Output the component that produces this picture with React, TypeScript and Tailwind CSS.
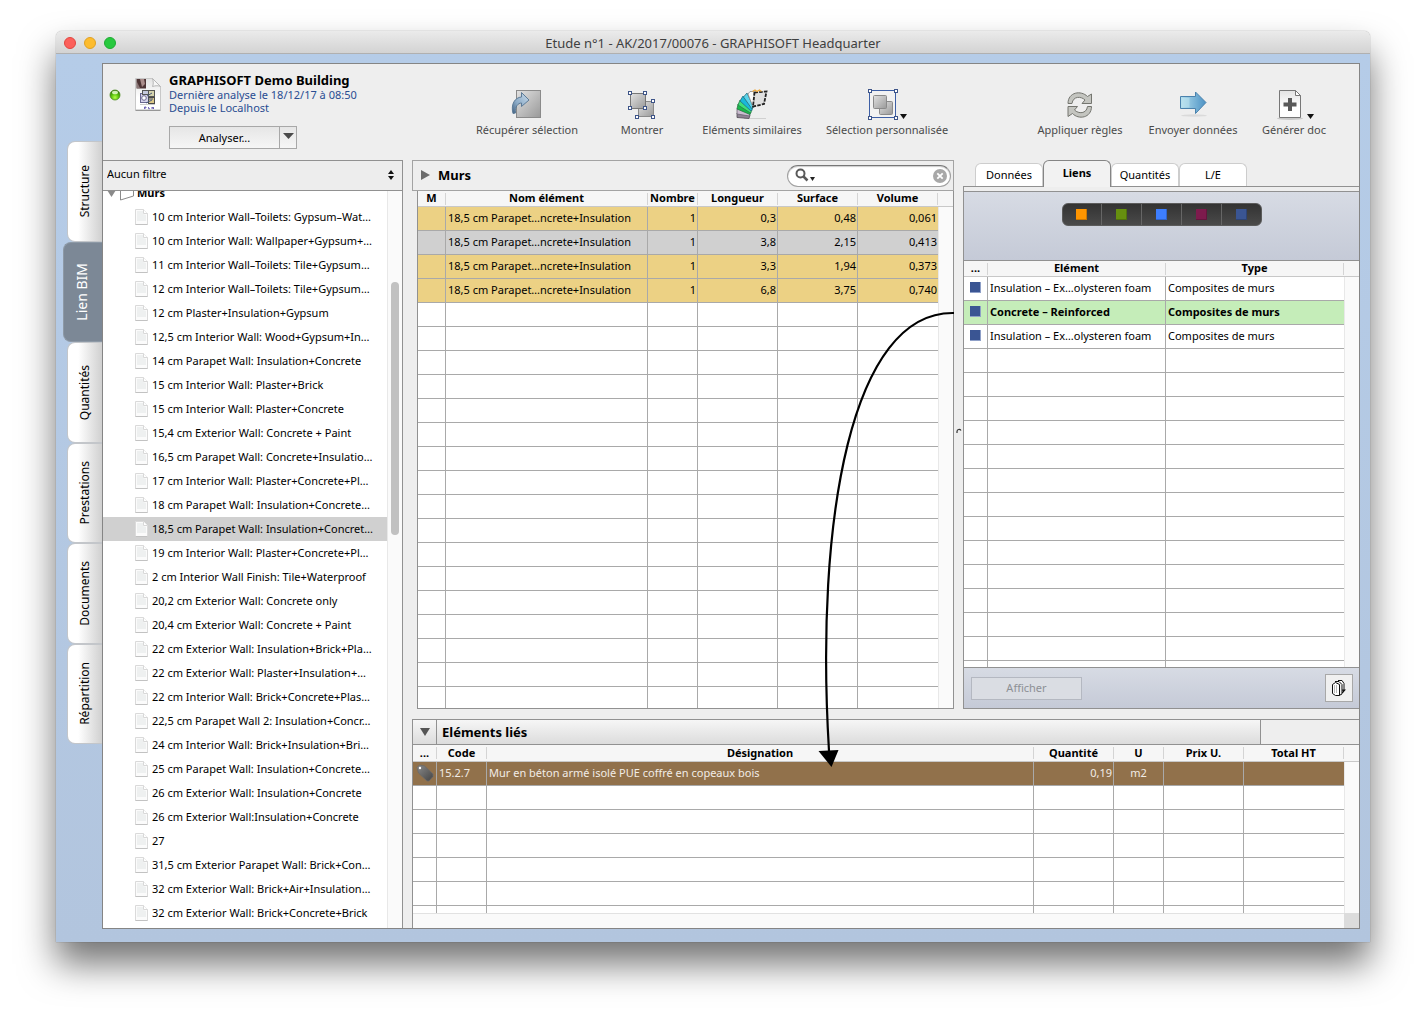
import React from "react";

const walls = [
  "10 cm Interior Wall–Toilets: Gypsum–Wat…",
  "10 cm Interior Wall: Wallpaper+Gypsum+…",
  "11 cm Interior Wall–Toilets: Tile+Gypsum…",
  "12 cm Interior Wall–Toilets: Tile+Gypsum…",
  "12 cm Plaster+Insulation+Gypsum",
  "12,5 cm Interior Wall: Wood+Gypsum+In…",
  "14 cm Parapet Wall: Insulation+Concrete",
  "15 cm Interior Wall: Plaster+Brick",
  "15 cm Interior Wall: Plaster+Concrete",
  "15,4 cm Exterior Wall: Concrete + Paint",
  "16,5 cm Parapet Wall: Concrete+Insulatio…",
  "17 cm Interior Wall: Plaster+Concrete+Pl…",
  "18 cm Parapet Wall: Insulation+Concrete…",
  "18,5 cm Parapet Wall: Insulation+Concret…",
  "19 cm Interior Wall: Plaster+Concrete+Pl…",
  "2 cm Interior Wall Finish: Tile+Waterproof",
  "20,2 cm Exterior Wall: Concrete only",
  "20,4 cm Exterior Wall: Concrete + Paint",
  "22 cm Exterior Wall: Insulation+Brick+Pla…",
  "22 cm Exterior Wall: Plaster+Insulation+…",
  "22 cm Interior Wall: Brick+Concrete+Plas…",
  "22,5 cm Parapet Wall 2: Insulation+Concr…",
  "24 cm Interior Wall: Brick+Insulation+Bri…",
  "25 cm Parapet Wall: Insulation+Concrete…",
  "26 cm Exterior Wall: Insulation+Concrete",
  "26 cm Exterior Wall:Insulation+Concrete",
  "27",
  "31,5 cm Exterior Parapet Wall: Brick+Con…",
  "32 cm Exterior Wall: Brick+Air+Insulation…",
  "32 cm Exterior Wall: Brick+Concrete+Brick",
];

const elements = [
  { values: ["", "18,5 cm Parapet…ncrete+Insulation", "1", "0,3", "0,48", "0,061"], selected: false },
  { values: ["", "18,5 cm Parapet…ncrete+Insulation", "1", "3,8", "2,15", "0,413"], selected: true },
  { values: ["", "18,5 cm Parapet…ncrete+Insulation", "1", "3,3", "1,94", "0,373"], selected: false },
  { values: ["", "18,5 cm Parapet…ncrete+Insulation", "1", "6,8", "3,75", "0,740"], selected: false },
];

const links = [
  { name: "Insulation – Ex…olysteren foam", type: "Composites de murs", active: false },
  { name: "Concrete – Reinforced", type: "Composites de murs", active: true },
  { name: "Insulation – Ex…olysteren foam", type: "Composites de murs", active: false },
];

const sideTabs = ["Structure", "Lien BIM", "Quantités", "Prestations", "Documents", "Répartition"];

const swatches = [
  { label: "Orange", color: "bg-[#ff9500]" },
  { label: "Vert", color: "bg-[#66900f]" },
  { label: "Bleu", color: "bg-[#3d7eff]" },
  { label: "Pourpre", color: "bg-[#7d1b4d]" },
  { label: "Marine", color: "bg-[#3a5593]" },
];

const range = (n: number) => Array.from({ length: n }, (_, i) => i);

function Gradients() {
  return (
    <svg width="0" height="0" className="absolute" aria-hidden="true">
      <defs>
        <linearGradient id="steel" x1="0" y1="0" x2="1" y2="1">
          <stop offset="0" stopColor="#e2e2e2" />
          <stop offset="1" stopColor="#999" />
        </linearGradient>
        <linearGradient id="sky" x1="0" y1="0" x2="1" y2="0">
          <stop offset="0" stopColor="#b4dfee" />
          <stop offset="1" stopColor="#4b91c4" />
        </linearGradient>
        <linearGradient id="bend" x1="1" y1="0" x2="0" y2="1">
          <stop offset="0" stopColor="#c9dbea" />
          <stop offset="0.6" stopColor="#8dacc8" />
          <stop offset="1" stopColor="#3f5f80" />
        </linearGradient>
        <linearGradient id="paper" x1="0" y1="0" x2="0" y2="1">
          <stop offset="0" stopColor="#e3e3e3" />
          <stop offset="0.6" stopColor="#fff" />
        </linearGradient>
        <linearGradient id="tag" x1="0" y1="0" x2="1" y2="1">
          <stop offset="0" stopColor="#8b8b8b" />
          <stop offset="1" stopColor="#444" />
        </linearGradient>
        <radialGradient id="led" cx="0.5" cy="0.75" r="0.7">
          <stop offset="0" stopColor="#b6ff4a" />
          <stop offset="0.5" stopColor="#5cc60c" />
          <stop offset="1" stopColor="#2c6d05" />
        </radialGradient>
      </defs>
    </svg>
  );
}

function DocIcon() {
  return (
    <svg width="13" height="16" viewBox="0 0 13 16" className="shrink-0" aria-hidden="true">
      <path d="M.5.5h8l4 4v11h-12z" fill="#fbfbfb" stroke="#dadada" />
      <path d="M2 2h6v3l3 1v6H2z" fill="#eef0f0" />
      <path d="M8.500.5v4h4" fill="#fff" stroke="#d8d8d8" />
      <path d="M.5 15.500h12" stroke="#c2c2c2" />
    </svg>
  );
}

function PlanFileIcon() {
  return (
    <svg width="26" height="33" viewBox="0 0 26 33" className="shrink-0" aria-hidden="true">
      <path d="M.5.5h17l8 8v23.500H.5z" fill="url(#paper)" stroke="#c8c8c8" />
      <path d="M17.500.5c1 3 1 6 0 8 3-1 6-1 8 0z" fill="#f7f7f7" stroke="#b5b5b5" />
      <path d="M1.500 1H11v9.500H1.500z" fill="#4d3435" />
      <path d="M5 1h4l1 5-3 3z" fill="#a98c8a" />
      <path d="M2 4l3 6H2z" fill="#8c7778" />
      <path d="M.5 32.400h25" stroke="#909090" />
      <rect x="5.500" y="15.500" width="8" height="9" fill="#d4d1ea" stroke="#6a678f" />
      <circle cx="9" cy="20" r="2.300" fill="#fff" stroke="#6a678f" />
      <rect x="13.500" y="12.500" width="6" height="6" fill="#d6d4ae" stroke="#555" />
      <rect x="7.500" y="12.500" width="6" height="4" fill="#c5c9dd" stroke="#555" />
      <rect x="13.500" y="19.500" width="6" height="6" fill="#dcc889" stroke="#4a4a4a" />
      <path d="M12 18l5-3M13 21h5M11 25l6-3" stroke="#4a5a7d" />
      <path d="M5 26.500h15" stroke="#aaa" strokeWidth="0.600" />
      <path d="M9.500 31v-2h1.500v1h-1.500M13.500 29v1.700h1.500M17 31v-2l1.500 2v-2" stroke="#5649a8" strokeWidth="0.800" fill="none" />
    </svg>
  );
}

function FetchIcon() {
  return (
    <svg width="32" height="32" viewBox="0 0 32 32" aria-hidden="true">
      <rect x="5.500" y="1.500" width="24" height="27" fill="url(#steel)" stroke="#8a8a8a" />
      <path d="M2 24.500C-.5 15 4 8.500 10.500 8V3.500L18 11l-7.500 6.500V14C7 14 4 17.500 4.500 24z" fill="url(#bend)" stroke="#5d7b97" />
    </svg>
  );
}

function Handle({ x, y }: { x: number; y: number }) {
  return <rect x={x} y={y} width="3" height="3" fill="#fff" stroke="#3d5488" />;
}

function ShowIcon() {
  return (
    <svg width="28" height="32" viewBox="0 0 28 32" aria-hidden="true">
      <rect x="10.500" y="12.500" width="15" height="15" fill="url(#steel)" stroke="#8a8a8a" />
      <rect x="2.500" y="4.500" width="15" height="15" fill="url(#steel)" stroke="#777" />
      <Handle x={0.5} y={2.5} />
      <Handle x={15.5} y={2.5} />
      <Handle x={0.5} y={17.5} />
      <Handle x={15.5} y={17.5} />
      <Handle x={23.5} y={10.5} />
      <Handle x={7.5} y={26.5} />
      <Handle x={23.5} y={26.5} />
    </svg>
  );
}

function FanIcon() {
  return (
    <svg width="32" height="32" viewBox="0 0 32 32" aria-hidden="true">
      <path d="M8 29.500h22" stroke="#d0d0d0" />
      <path d="M1 24l13 2-1 3.500-12-1z" fill="#8f8394" stroke="#4e4a52" strokeWidth="0.800" />
      <path d="M1 19.500l13 5-.5 2.500L1 25z" fill="#cbbcd0" stroke="#6a6270" strokeWidth="0.800" />
      <path d="M2 15l13 8-1 2.500L1 20z" fill="#18b84b" stroke="#2a7a44" strokeWidth="0.800" />
      <path d="M4 11l12 10-1.500 3L2 16z" fill="#3ee07a" stroke="#2a7a44" strokeWidth="0.800" />
      <path d="M7 7l9.500 13-1.500 2L4 12z" fill="#19b9da" stroke="#24707f" strokeWidth="0.800" />
      <path d="M11 4l6.500 14-1.500 2L7.500 8z" fill="#5ad3ea" stroke="#24707f" strokeWidth="0.800" />
      <path d="M14 2.500h4L19 17l-2 1-5-13z" fill="#fafafa" stroke="#888" strokeWidth="0.800" />
      <path d="M18.500 3.500l12-1L28 15l-11 2.500z" fill="#e0e0e0" />
      <path d="M18.500 3.500l12-1L28 15l-11 2.500z" fill="none" stroke="#222" strokeWidth="1.800" strokeDasharray="3.500 1.200" />
      <path d="M16.500 2.500l2.500-1.500 2 1.500L23.500 1l2 1.500" fill="none" stroke="#efa83a" strokeWidth="1.200" />
    </svg>
  );
}

function CustomIcon() {
  return (
    <svg width="40" height="32" viewBox="0 0 40 32" aria-hidden="true">
      <rect x="2.500" y="1.500" width="26" height="27" fill="#f2f2f2" stroke="#3d5fa5" />
      <rect x="12.500" y="12.500" width="13" height="13" rx="1" fill="url(#steel)" stroke="#8a8a8a" />
      <rect x="6.500" y="6.500" width="13" height="13" rx="1" fill="url(#steel)" stroke="#8a8a8a" />
      <Handle x={1.5} y={0.5} />
      <Handle x={27.5} y={0.5} />
      <Handle x={1.5} y={27.5} />
      <Handle x={27.5} y={27.5} />
      <path d="M33 25h7l-3.500 5z" fill="#111" />
    </svg>
  );
}

function RulesIcon() {
  return (
    <svg width="28" height="32" viewBox="0 0 28 32" aria-hidden="true">
      <g fill="#c4c5c0" stroke="#74756f" strokeLinejoin="round">
        <path d="M2 14.500C2 3 15 1 21.500 7.500L25.500 5v9.500H16L19 11C15 7 7 7 6 14.500z" />
        <path d="M25.500 17.500C25.500 29 12.500 31 6.500 24.500L2 27.500v-10h9.500L8.500 21C12.500 25 20.500 25 21.500 17.500z" />
      </g>
    </svg>
  );
}

function SendIcon() {
  return (
    <svg width="28" height="32" viewBox="0 0 28 32" aria-hidden="true">
      <ellipse cx="15" cy="26.500" rx="13" ry="1.200" fill="#dadada" />
      <path d="M1.500 7.500h15V3L27 13.500 16.500 24.500v-5h-15z" fill="url(#sky)" stroke="#4a82ad" />
      <path d="M2.500 9h8v9.500h-8z" fill="#c4e8f2" opacity="0.500" />
    </svg>
  );
}

function NewDocIcon() {
  return (
    <svg width="42" height="32" viewBox="0 0 42 32" aria-hidden="true">
      <ellipse cx="17" cy="29.500" rx="13" ry="1.500" fill="#c9c9c9" />
      <path d="M6.500 1.500h16l5 5v22h-21z" fill="url(#paper)" stroke="#777" />
      <path d="M22.500 1.500v5h5z" fill="#fff" stroke="#777" />
      <path d="M15 9h4v4.500h4.500v4H19V22h-4v-4.500h-4.500v-4H15z" fill="#595959" />
      <path d="M34 25h7l-3.500 5z" fill="#111" />
    </svg>
  );
}

function StackIcon() {
  return (
    <svg width="16" height="18" viewBox="0 0 16 18" aria-hidden="true">
      <path d="M7 1.500h4l2 3V12l-3 3" fill="#fff" stroke="#111" />
      <path d="M4 2.500h4l3 3V15l-3 1.500" fill="#eee" stroke="#111" />
      <path d="M1.500 5.500l3-2 4 2v11h-4l-3-2z" fill="#fff" stroke="#111" />
      <path d="M3 7h4M3 9h4M3 11h4M3 13h4" stroke="#777" strokeDasharray="1 1" />
      <path d="M11 10.500h4L12 14z" fill="#111" />
    </svg>
  );
}

function TagIcon() {
  return (
    <svg width="18" height="18" viewBox="0 0 18 18" className="mx-auto" aria-hidden="true">
      <path d="M1 3.500L3.500 1l5 1 8.500 8v2.500L13 17h-2L2.500 9z" fill="url(#tag)" stroke="#6a6a6a" strokeWidth="0.800" />
      <circle cx="4" cy="4" r="1.200" fill="#fff" />
    </svg>
  );
}

function ToolButton({ label, width, children }: { label: string; width: string; children: React.ReactNode }) {
  return (
    <button type="button" className={`flex shrink-0 flex-col items-center ${width}`}>
      {children}
      <span className="mt-px leading-4 whitespace-nowrap text-[#4a4a4a]">{label}</span>
    </button>
  );
}

function Th({ children, last, height = "h-4" }: { children?: React.ReactNode; last?: boolean; height?: string }) {
  return (
    <th scope="col" className={`border-b border-[#c8c8c8] bg-[#f6f6f6] p-0 font-bold ${height}`}>
      <span
        className={`block h-3 text-center whitespace-nowrap ${height === "h-4" ? "leading-[10px]" : "leading-3"} ${last ? "" : "border-r border-[#d4d4d4]"}`}
      >
        {children}
      </span>
    </th>
  );
}

const line = "border-b border-r border-[#a9a9a9] px-0 pt-0 pb-[2px]";
const lastCell = "border-b border-[#a9a9a9] px-0 pt-0 pb-[2px]";
const gutter = "border-l border-[#e8e8e8] bg-[#fafafa] p-0";

function ElementsTable() {
  const align = ["text-center", "text-left", "text-right", "text-right", "text-right", "text-right"];
  return (
    <table className="w-full table-fixed border-separate border-spacing-0 bg-white">
      <colgroup>
        <col className="w-7" />
        <col />
        <col className="w-[50px]" />
        <col className="w-20" />
        <col className="w-20" />
        <col className="w-20" />
        <col className="w-[15px]" />
      </colgroup>
      <thead>
        <tr>
          <Th>M</Th>
          <Th>Nom élément</Th>
          <Th>Nombre</Th>
          <Th>Longueur</Th>
          <Th>Surface</Th>
          <Th>Volume</Th>
          <Th last />
        </tr>
      </thead>
      <tbody>
        {elements.map((row, r) => (
          <tr key={r} className={row.selected ? "bg-[#d0d0d0]" : "bg-[#ecd184]"}>
            {row.values.map((v, c) => (
              <td key={c} className={`h-6 leading-4 whitespace-nowrap ${c === 5 ? lastCell : line} ${align[c]}`}>
                <span className={c === 1 ? "pl-[2px]" : "pr-px"}>{v}</span>
              </td>
            ))}
            <td className={gutter} />
          </tr>
        ))}
        {range(17).map((r) => (
          <tr key={`e${r}`}>
            {range(6).map((c) => (
              <td
                key={c}
                className={
                  r === 16
                    ? `h-[21px] p-0 ${c === 5 ? "" : "border-r border-[#a9a9a9]"}`
                    : `h-6 ${c === 5 ? lastCell : line}`
                }
              />
            ))}
            <td className={gutter} />
          </tr>
        ))}
      </tbody>
    </table>
  );
}

function LinksTable() {
  return (
    <table className="w-full table-fixed border-separate border-spacing-0 bg-white">
      <colgroup>
        <col className="w-6" />
        <col className="w-[178px]" />
        <col />
        <col className="w-[15px]" />
      </colgroup>
      <thead>
        <tr>
          <Th>...</Th>
          <Th>Elément</Th>
          <Th>Type</Th>
          <Th last />
        </tr>
      </thead>
      <tbody>
        {links.map((row, r) => (
          <tr key={r} className={row.active ? "bg-[#c5edb9] font-bold" : ""}>
            <td className={`h-6 ${line}`}>
              <span className="ml-[6px] block size-[11px] border-r border-b border-[#8fa0c8] bg-[#3a5593]" />
            </td>
            <td className={`h-6 leading-4 whitespace-nowrap ${line}`}>
              <span className="pl-[2px]">{row.name}</span>
            </td>
            <td className={`h-6 leading-4 whitespace-nowrap ${lastCell}`}>
              <span className="pl-[2px]">{row.type}</span>
            </td>
            <td className={gutter} />
          </tr>
        ))}
        {range(14).map((r) => (
          <tr key={`e${r}`}>
            {range(3).map((c) => (
              <td
                key={c}
                className={
                  r === 13
                    ? `h-[6px] p-0 ${c === 2 ? "" : "border-r border-[#a9a9a9]"}`
                    : `h-6 ${c === 2 ? lastCell : line}`
                }
              />
            ))}
            <td className={gutter} />
          </tr>
        ))}
      </tbody>
    </table>
  );
}

function LinkedTable() {
  return (
    <table className="w-full table-fixed border-separate border-spacing-0 bg-white">
      <colgroup>
        <col className="w-6" />
        <col className="w-[50px]" />
        <col />
        <col className="w-20" />
        <col className="w-[50px]" />
        <col className="w-20" />
        <col className="w-[100px]" />
        <col className="w-[15px]" />
      </colgroup>
      <thead>
        <tr>
          <Th height="h-[17px]">...</Th>
          <Th height="h-[17px]">Code</Th>
          <Th height="h-[17px]">Désignation</Th>
          <Th height="h-[17px]">Quantité</Th>
          <Th height="h-[17px]">U</Th>
          <Th height="h-[17px]">Prix U.</Th>
          <Th height="h-[17px]">Total HT</Th>
          <Th height="h-[17px]" last />
        </tr>
      </thead>
      <tbody>
        <tr className="bg-[#91714b] leading-4 whitespace-nowrap text-[#f1ece6]">
          <td className={`h-6 ${line}`}>
            <TagIcon />
          </td>
          <td className={`h-6 ${line}`}>
            <span className="pl-[2px]">15.2.7</span>
          </td>
          <td className={`h-6 ${line}`}>
            <span className="pl-[2px]">Mur en béton armé isolé PUE coffré en copeaux bois</span>
          </td>
          <td className={`h-6 text-right ${line}`}>
            <span className="pr-px">0,19</span>
          </td>
          <td className={`h-6 text-center ${line}`}>m2</td>
          <td className={`h-6 ${line}`} />
          <td className={`h-6 ${lastCell}`} />
          <td className={gutter} />
        </tr>
        {range(6).map((r) => (
          <tr key={r}>
            {range(7).map((c) => (
              <td
                key={c}
                className={
                  r === 5
                    ? `h-[7px] p-0 ${c === 6 ? "" : "border-r border-[#a9a9a9]"}`
                    : `h-6 ${c === 6 ? lastCell : line}`
                }
              />
            ))}
            <td className={gutter} />
          </tr>
        ))}
      </tbody>
    </table>
  );
}

function SideTabs() {
  return (
    <nav className="flex h-[603px] w-[46px] shrink-0 flex-col items-end" aria-label="Sections">
      {sideTabs.map((tab) =>
        tab === "Lien BIM" ? (
          <button
            key={tab}
            type="button"
            className="flex w-[39px] flex-1 items-center justify-center rounded-l-lg border border-r-0 border-[#8d99a6] bg-[#7c8896] pr-1 text-[14px] text-white"
          >
            <span className="rotate-180 [writing-mode:vertical-rl]">{tab}</span>
          </button>
        ) : (
          <button
            key={tab}
            type="button"
            className="flex w-[35px] flex-1 items-center justify-center rounded-l-lg border border-r-0 border-[#c3c6ca] bg-linear-to-r from-white from-30% to-[#d0d0d0] text-[12px] text-black"
          >
            <span className="rotate-180 [writing-mode:vertical-rl]">{tab}</span>
          </button>
        ),
      )}
    </nav>
  );
}

function ProjectHeader() {
  return (
    <header className="flex h-24 items-start">
      <div className="flex w-[358px] shrink-0 items-start pt-2 pl-[6px]">
        <svg width="12" height="14" viewBox="0 0 12 14" className="mt-4 shrink-0" aria-label="Connecté" role="img">
          <circle cx="6" cy="7" r="5" fill="url(#led)" stroke="#4c8a20" strokeWidth="0.800" />
          <ellipse cx="6" cy="4.500" rx="3" ry="1.800" fill="#eaffd2" opacity="0.850" />
        </svg>
        <div className="mt-[6px] ml-[14px]">
          <PlanFileIcon />
        </div>
        <div className="ml-2">
          <h1 className="text-[13px] leading-4 font-bold">GRAPHISOFT Demo Building</h1>
          <p className="leading-[13px] text-[#294d92]">Dernière analyse le 18/12/17 à 08:50</p>
          <p className="leading-[13px] text-[#294d92]">Depuis le Localhost</p>
          <div className="mt-3 flex h-[23px] w-32 border border-[#a8a8a8] bg-linear-to-b from-[#e6e6e6] to-[#f6f6f6]">
            <button type="button" className="flex-1 border-r border-[#a8a8a8] text-center leading-5">
              Analyser...
            </button>
            <button type="button" aria-label="Options d'analyse" className="flex w-4 items-start justify-center pt-[6px]">
              <svg width="11" height="6" viewBox="0 0 11 6" aria-hidden="true">
                <path d="M0 0h11L5.500 6z" fill="#4a4a4a" />
              </svg>
            </button>
          </div>
        </div>
      </div>
      <div className="flex pt-[25px]">
        <ToolButton label="Récupérer sélection" width="w-[132px]"><FetchIcon /></ToolButton>
        <ToolButton label="Montrer" width="w-[98px]"><ShowIcon /></ToolButton>
        <ToolButton label="Eléments similaires" width="w-[122px]"><FanIcon /></ToolButton>
        <ToolButton label="Sélection personnalisée" width="w-[148px]"><CustomIcon /></ToolButton>
      </div>
      <div className="mr-5 ml-auto flex pt-[25px]">
        <ToolButton label="Appliquer règles" width="w-[114px]"><RulesIcon /></ToolButton>
        <ToolButton label="Envoyer données" width="w-[112px]"><SendIcon /></ToolButton>
        <ToolButton label="Générer doc" width="w-[90px]"><NewDocIcon /></ToolButton>
      </div>
    </header>
  );
}

function WallTree() {
  return (
    <aside className="flex w-[300px] shrink-0 flex-col border-t border-r border-[#919191] bg-white">
      <div className="relative h-[30px] border-b border-[#919191] bg-[#ededed]">
        <select aria-label="Filtre" className="h-full w-full appearance-none bg-transparent pb-[2px] pl-1 outline-none">
          <option>Aucun filtre</option>
        </select>
        <svg width="6" height="10" viewBox="0 0 6 10" className="pointer-events-none absolute top-[9px] right-2" aria-hidden="true">
          <path d="M3 0l3 4H0zM3 10L0 6h6z" fill="#111" />
        </svg>
      </div>
      <div className="flex flex-1">
        <div className="min-w-0 flex-1 overflow-hidden pb-[3px]">
          <div className="flex h-[14px] items-end overflow-hidden">
            <div className="flex h-6 shrink-0 items-center font-bold">
              <svg width="32" height="16" viewBox="0 0 32 16" className="shrink-0" aria-hidden="true">
                <path d="M4 5h9l-4.500 7z" fill="#8a8a8a" />
                <path d="M17.500 1.500h13v9.500l-13 4z" fill="#fff" stroke="#8a8a8a" />
              </svg>
              <span className="pl-[2px]">Murs</span>
            </div>
          </div>
          <ul>
            {walls.map((wall, i) => (
              <li key={i}>
                <button
                  type="button"
                  className={`flex h-6 w-full items-center gap-1 pl-8 text-left whitespace-nowrap ${i === 13 ? "bg-[#d0d0d0]" : ""}`}
                >
                  <DocIcon />
                  <span>{wall}</span>
                </button>
              </li>
            ))}
          </ul>
        </div>
        <div className="w-[15px] shrink-0 border-l border-[#e8e8e8] bg-[#fafafa] pt-[91px] pl-[3px]">
          <div className="h-[253px] w-2 rounded-full bg-[#c1c1c1]" />
        </div>
      </div>
    </aside>
  );
}

function ElementsPanel() {
  return (
    <section className="min-w-0 flex-1">
      <div className="flex h-[31px] items-center border border-[#a3a3a3] pr-[2px] pb-[2px]">
        <svg width="9" height="10" viewBox="0 0 9 10" className="ml-2" aria-hidden="true">
          <path d="M0 0l9 5-9 5z" fill="#6b6b6b" />
        </svg>
        <h2 className="ml-2 text-[13px] leading-4 font-bold">Murs</h2>
        <div className="mt-[2px] ml-auto flex h-[22px] w-[164px] items-center rounded-full border border-[#a0a0a0] border-t-[#777] bg-white px-[6px] shadow-[inset_0_1px_1px_rgba(0,0,0,0.2)]">
          <svg width="22" height="15" viewBox="0 0 22 15" className="shrink-0" aria-hidden="true">
            <circle cx="6.500" cy="5.500" r="4" fill="none" stroke="#5a5a5a" strokeWidth="2" />
            <path d="M9.500 8.500l4 4" stroke="#5a5a5a" strokeWidth="2.500" />
            <path d="M16 9h5l-2.500 4z" fill="#222" />
          </svg>
          <input aria-label="Rechercher" className="min-w-0 flex-1 bg-transparent outline-none" />
          <button type="button" aria-label="Effacer" className="-mr-[3px]">
            <svg width="14" height="14" viewBox="0 0 14 14" aria-hidden="true">
              <circle cx="7" cy="7" r="7" fill="#a8a8a8" />
              <path d="M4.300 4.300l5.400 5.400M9.700 4.300L4.300 9.700" stroke="#fff" strokeWidth="1.800" />
            </svg>
          </button>
        </div>
      </div>
      <div className="ml-[5px] border-x border-b border-[#919191]">
        <ElementsTable />
      </div>
    </section>
  );
}

function LinksPanel() {
  const side =
    "mt-[3px] w-[68px] rounded-t-md border border-b-0 border-[#cdcdcd] bg-white text-center leading-[22px]";
  return (
    <section className="w-[396px] shrink-0">
      <div className="flex h-[26px] pl-3">
        <button type="button" className={side}>Données</button>
        <button type="button" className="relative z-10 -mb-px w-[68px] rounded-t-md border border-b-0 border-[#858585] bg-[#f2f2f2] pb-[2px] text-center leading-6 font-bold">
          Liens
        </button>
        <button type="button" className={side}>Quantités</button>
        <button type="button" className={side}>L/E</button>
      </div>
      <div className="border-t border-b border-l border-[#919191]">
        <div className="h-[5px] border-b border-[#919191]" />
        <div className="flex h-[69px] items-start justify-center border-b border-[#919191] bg-linear-to-b from-[#d7dbe4] to-[#c5cad7] pt-[11px]">
          <div className="flex h-[23px] w-[200px] overflow-hidden rounded-md border border-[#5b5b5b] bg-linear-to-b from-[#333] to-[#4a4a4a]">
            {swatches.map((s, i) => (
              <button
                key={s.label}
                type="button"
                aria-label={s.label}
                className={`flex flex-1 items-center justify-center ${i < 4 ? "border-r border-[#666]" : ""}`}
              >
                <span className={`size-[11px] border-r border-b border-black/20 ${s.color}`} />
              </button>
            ))}
          </div>
        </div>
        <LinksTable />
        <div className="flex h-[41px] items-center justify-between border-t border-[#919191] bg-linear-to-b from-[#d7dbe4] to-[#c5cad7] pr-[6px] pl-[7px]">
          <button type="button" disabled className="h-[23px] w-[111px] border border-[#b4b8c1] bg-[#dadde3] text-center leading-5 text-[#8d9095]">
            Afficher
          </button>
          <button type="button" aria-label="Copier" className="flex size-7 items-center justify-center border border-[#a8a8a8] bg-[#f0f0f0]">
            <StackIcon />
          </button>
        </div>
      </div>
    </section>
  );
}

function LinkedPanel() {
  return (
    <section className="mt-[10px] border-t border-l border-[#919191]">
      <div className="flex h-[25px] border-b border-[#919191]">
        <div className="flex flex-1 bg-linear-to-b from-[#f6f6f6] via-[#e9e9e9] to-[#dcdcdc]">
          <button type="button" aria-label="Replier" className="flex w-6 items-center justify-center border-r border-[#919191]">
            <svg width="10" height="8" viewBox="0 0 10 8" aria-hidden="true">
              <path d="M0 0h10L5 8z" fill="#555" />
            </svg>
          </button>
          <h2 className="pl-[5px] text-[13px] leading-6 font-bold">Eléments liés</h2>
        </div>
        <div className="w-[99px] border-l border-[#919191]" />
      </div>
      <LinkedTable />
      <div className="flex h-[15px] border-t border-[#e2e2e2] bg-[#fafafa]">
        <div className="-mt-px ml-auto w-[15px] bg-[#dcdcdc]" />
      </div>
    </section>
  );
}

export default function App() {
  return (
    <div className="min-h-screen overflow-hidden bg-white px-14 pt-[31px] pb-20 font-['Noto_Sans',sans-serif] text-[11px] text-black">
      <Gradients />
      <div className="rounded-t-md shadow-[0_0_1px_rgba(0,0,0,0.600),0_22px_36px_rgba(0,0,0,0.550)]">
        <div className="flex h-[23px] items-center rounded-t-md border-b border-[#b0b0b0] bg-linear-to-b from-[#ebebeb] to-[#d3d3d3]">
          <div className="flex w-24 gap-2 pt-px pl-2">
            <button type="button" aria-label="Fermer" className="size-3 rounded-full border border-[#e2463f] bg-[#fc605b]" />
            <button type="button" aria-label="Réduire" className="size-3 rounded-full border border-[#e0a123] bg-[#fdbc2e]" />
            <button type="button" aria-label="Agrandir" className="size-3 rounded-full border border-[#1fab33] bg-[#28c93f]" />
          </div>
          <div className="flex-1 pt-px text-center text-[13px] leading-5 text-[#404040]">Etude n°1 - AK/2017/00076 - GRAPHISOFT Headquarter</div>
          <div className="w-24" />
        </div>
        <div className="flex bg-linear-to-b from-[#b5cce8] to-[#b2c5de] pr-[10px] pb-[13px]">
          <div className="pt-[87px]">
            <SideTabs />
          </div>
          <main className="relative mt-[9px] min-w-0 flex-1 border border-[#858585] bg-[#eee]">
            <ProjectHeader />
            <div className="flex gap-[9px]">
              <WallTree />
              <div className="min-w-0 flex-1">
                <div className="relative flex gap-[9px]">
                  <ElementsPanel />
                  <LinksPanel />
                  <svg
                    width="140"
                    height="460"
                    viewBox="0 0 140 460"
                    className="pointer-events-none absolute top-[150px] right-[405px] z-20 overflow-visible"
                    aria-hidden="true"
                  >
                    <path d="M140 3C37 1 1 210 15 441" fill="none" stroke="#000" strokeWidth="2.200" />
                    <path d="M4.500 441l20-1-7 17z" fill="#000" />
                  </svg>
                  <svg width="6" height="6" viewBox="0 0 6 6" className="absolute top-[268px] right-[397px]" aria-hidden="true">
                    <path d="M1 5V3.500C1 1 4 1 5 2.500" fill="none" stroke="#333" strokeWidth="1.200" />
                  </svg>
                </div>
                <LinkedPanel />
              </div>
            </div>
          </main>
        </div>
      </div>
    </div>
  );
}
